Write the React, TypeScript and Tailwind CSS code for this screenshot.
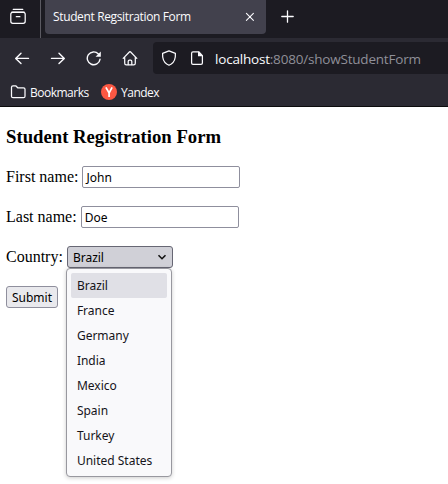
import type { ReactNode } from "react";

const countries = ["Brazil", "France", "Germany", "India", "Mexico", "Spain", "Turkey", "United States"];

function Icon({ children, size = 16, className = "" }: { children: ReactNode; size?: number; className?: string }) {
  return (
    <svg
      width={size}
      height={size}
      viewBox={`0 0 ${size} ${size}`}
      fill="none"
      stroke="#fbfbfe"
      strokeWidth="1.25"
      strokeLinecap="round"
      strokeLinejoin="round"
      className={`block shrink-0 ${className}`}
    >
      {children}
    </svg>
  );
}

function TabBar() {
  return (
    <div className="flex h-[38px] bg-[#1c1b22]">
      <div className="flex w-[41px] shrink-0 border-r border-[#5b5a62] pl-[10px] pt-2">
        <Icon>
          <path d="M3.2 1.3h9.6" />
          <path d="M1.8 4.3h12.4" strokeWidth="1.4" />
          <path d="M.8 6.3q0-2 2-2h10.4q2 0 2 2v7q0 2-2 2H2.8q-2 0-2-2z" />
          <path d="M6.3 8.7h3.6" />
        </Icon>
      </div>
      <div className="ml-1 flex h-[34px] w-[221px] shrink-0 items-center rounded-b bg-[#42414d] pl-2 pr-[11px]">
        <span className="flex-1 whitespace-nowrap text-[12px] leading-4 tracking-[-0.36px]">Student Regsitration Form</span>
        <Icon size={10}>
          <path d="M1.4 1.4l7 7M8.4 1.4l-7 7" strokeWidth="1.1" />
        </Icon>
      </div>
      <Icon size={14} className="ml-[15px] mt-[10px]">
        <path d="M6.5 .8v11.4M.8 6.5h11.4" strokeWidth="1.3" />
      </Icon>
    </div>
  );
}

function NavBar() {
  return (
    <div className="flex h-10 items-start pl-[14px] pt-1">
      <div className="flex w-[139px] gap-5 pt-2">
        <Icon>
          <path d="M14.5 8.4H1.7M7 3.2L1.7 8.4L7 13.6" strokeWidth="1.4" />
        </Icon>
        <Icon>
          <path d="M1.5 8.4h12.8M9 3.2L14.3 8.4L9 13.6" strokeWidth="1.4" />
        </Icon>
        <Icon>
          <path d="M14 9.3A6.4 6.4 0 1 1 12.4 4" strokeWidth="1.4" />
          <path d="M14.8 1.5v5.2H9.6z" fill="#fbfbfe" stroke="none" />
        </Icon>
        <Icon>
          <path d="M1.2 8.4L7.6 1.8q.4-.4.8 0l6.4 6.6M2.7 7.2v6q0 1.6 1.6 1.6h7.4q1.6 0 1.6-1.6v-6" />
          <path d="M6.2 14.6v-3.2q0-1.2 1.2-1.2h1.2q1.2 0 1.2 1.2v3.2" />
        </Icon>
      </div>
      <div className="flex h-8 flex-1 items-center rounded-l bg-[#1c1b22] pl-2">
        <Icon>
          <path d="M8 .9L14.4 3.4q.4 7.6-4.1 10.6L8 15.2L5.7 14Q1.2 11 1.6 3.4z" />
        </Icon>
        <Icon className="ml-3">
          <path d="M9.7 1.8H4Q2.6 1.8 2.6 3.2v9.8q0 1.4 1.4 1.4h8q1.4 0 1.4-1.4V5.7z" />
          <path d="M9 1.3v4.9h4.8z" fill="#fbfbfe" stroke="none" />
        </Icon>
        <span className="ml-[10px] mt-[2px] whitespace-nowrap text-[13.5px] leading-5 tracking-[-0.2px] text-[#8f8f98]">
          <span className="text-[#fbfbfe]">localhost</span>:8080/showStudentForm
        </span>
      </div>
    </div>
  );
}

function BookmarksBar() {
  return (
    <div className="flex h-[24px] items-center pl-[10px] text-[12px] tracking-[-0.5px]">
      <Icon>
        <path d="M1.5 12.2V3.3q0-1.5 1.5-1.5h2.7l2 2h5.8q1.5 0 1.5 1.5v6.9q0 1.5-1.5 1.5H3q-1.5 0-1.5-1.5z" />
      </Icon>
      <span className="ml-1 mt-[2px] w-[71px] whitespace-nowrap">Bookmarks</span>
      <svg width="16" height="16" viewBox="0 0 16 16" className="block shrink-0">
        <circle cx="8" cy="8" r="8" fill="#fc5843" />
        <path d="M4.9 3.3L8.1 8.9l3-5.6M8.1 8.5v4.6" fill="none" stroke="#fff" strokeWidth="1.7" />
      </svg>
      <span className="ml-1 mt-[2px] whitespace-nowrap">Yandex</span>
    </div>
  );
}

function Field({ label, value }: { label: string; value: string }) {
  return (
    <div className="mb-[18px] flex h-[22px] items-center gap-1">
      <label className="whitespace-nowrap">{label}</label>
      <div className="flex h-[22px] w-[158px] items-center rounded-[2px] border border-[#8f8f9d] bg-white pl-[3px] pt-px font-['Noto_Sans',sans-serif] text-[12px]">
        {value}
      </div>
    </div>
  );
}

function CountrySelect() {
  return (
    <div className="relative h-[22px] w-[106px] font-['Noto_Sans',sans-serif] text-[12px]">
      <div className="flex h-[22px] items-center justify-between rounded-[3px] border border-[#676774] bg-[#d0d0d7] pl-[5px] pr-[5px]">
        <span className="mt-px">Brazil</span>
        <svg width="10" height="8" viewBox="0 0 10 8" fill="none" stroke="#111" strokeWidth="1.6">
          <path d="M1.5 2.2L5 5.7l3.5-3.5" />
        </svg>
      </div>
      <ul className="absolute -left-px top-[22px] w-[106px] rounded-[4px] border border-[#98989f] bg-[#f9f9fb] p-1 pb-[3px] text-[#15141a] shadow-[0_1px_4px_rgba(0,0,0,0.2)]">
        {countries.map((country, i) => (
          <li key={country} className={`flex h-[25px] items-center whitespace-nowrap rounded-[2px] pl-[6px] ${i === 0 ? "bg-[#e0e0e6]" : ""}`}>
            {country}
          </li>
        ))}
      </ul>
    </div>
  );
}

export default function App() {
  return (
    <div className="h-[484px] w-[448px] overflow-hidden bg-white text-black">
      <header className="h-[107px] border-b border-[#0c0c0d] bg-[#2b2a33] font-['Open_Sans',sans-serif] text-[#fbfbfe]">
        <TabBar />
        <NavBar />
        <div className="pt-[2px]">
          <BookmarksBar />
        </div>
      </header>
      <main className="pl-[6px] pt-[19px] font-['Liberation_Serif',serif] text-[16px]">
        <h1 className="mb-[18px] h-[22px] text-[18.72px] font-bold leading-[22px]">Student Registration Form</h1>
        <Field label="First name:" value="John" />
        <Field label="Last name:" value="Doe" />
        <div className="mb-[18px] flex h-[22px] items-center gap-1">
          <label>Country:</label>
          <CountrySelect />
        </div>
        <button className="block h-[22px] w-[52px] rounded-[3px] border border-[#8f8f9d] bg-[#e9e9ed] pt-px font-['Noto_Sans',sans-serif] text-[12px] leading-5">
          Submit
        </button>
      </main>
    </div>
  );
}
